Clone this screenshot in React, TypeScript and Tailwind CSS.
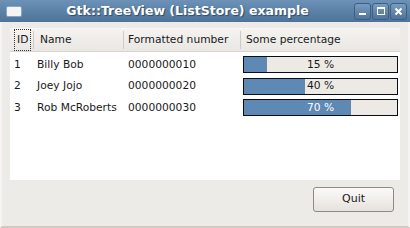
import React from 'react'

const rows = [
  { id: 1, name: 'Billy Bob', num: '0000000010', pct: 15 },
  { id: 2, name: 'Joey Jojo', num: '0000000020', pct: 40 },
  { id: 3, name: 'Rob McRoberts', num: '0000000030', pct: 70 },
]

function TitleButton({ children }: { children: React.ReactNode }) {
  return (
    <div className="flex h-[17px] w-[17px] items-center justify-center rounded-[3px] border border-[#3d5f82] bg-gradient-to-b from-[#7a9cc0] to-[#4f7399]">
      {children}
    </div>
  )
}

export default function App() {
  return (
    <div className="flex h-[228px] w-[410px] flex-col overflow-hidden bg-[#edebe7] font-['DejaVu_Sans',sans-serif] text-[10.7px] text-[#1a1a1a]">
      {/* title bar */}
      <div className="flex h-[22px] items-center bg-gradient-to-b from-[#6d92b8] to-[#4e7399] pl-[7px] pr-[3px]">
        <div className="h-[9px] w-[14px] rounded-[1px] bg-[#f4f4f4] shadow-[0_0_0_1px_#8aa6c4]" />
        <div className="flex-1 text-center text-[12.5px] font-bold text-white [text-shadow:1px_1px_1px_#2c4866]">
          Gtk::TreeView (ListStore) example
        </div>
        <div className="flex gap-[1px]">
          <TitleButton>
            <div className="mt-[6px] h-[2px] w-[7px] bg-white" />
          </TitleButton>
          <TitleButton>
            <div className="h-[8px] w-[8px] border-[1.5px] border-t-2 border-white" />
          </TitleButton>
          <TitleButton>
            <svg width="9" height="9" viewBox="0 0 9 9">
              <path d="M1.5 1.5 L7.5 7.5 M7.5 1.5 L1.5 7.5" stroke="white" strokeWidth="2" />
            </svg>
          </TitleButton>
        </div>
      </div>

      {/* body */}
      <div className="flex flex-1 flex-col border-x-2 border-b-2 border-x-[#f6f4f2] border-b-[#cfc9c2] px-[8px] pt-[6px]">
        <div className="flex h-[152px] flex-col border-t border-[#f8f7f5] bg-white">
          {/* header */}
          <div className="flex h-[23px] items-center border-b border-[#d8d4cf] bg-gradient-to-b from-[#f4f3f1] to-[#eae7e3]">
            <div className="flex w-[23px] items-center pl-[4px]">
              <span className="border border-dotted border-[#333] px-[2px] py-[2px]">ID</span>
            </div>
            <div className="h-[18px] w-px bg-[#cfcac4]" />
            <div className="w-[89px] pl-[6px]">Name</div>
            <div className="h-[18px] w-px bg-[#cfcac4]" />
            <div className="w-[116px] pl-[4px]">Formatted number</div>
            <div className="h-[18px] w-px bg-[#cfcac4]" />
            <div className="flex-1 pl-[5px]">Some percentage</div>
          </div>
          {/* rows */}
          <div className="flex flex-col pt-[2px]">
            {rows.map((r) => (
              <div key={r.id} className="flex h-[21.5px] items-center">
                <div className="w-[25px] pl-[4px]">{r.id}</div>
                <div className="w-[90px] pl-[2px] whitespace-nowrap">{r.name}</div>
                <div className="w-[117px] pl-[3px]">{r.num}</div>
                <div className="pl-[1px]">
                  <div className="relative h-[17px] w-[155px] border border-[#0c0c14] bg-[#edeae6]">
                    <div className="h-full bg-[#5d89b4]" style={{ width: `${r.pct}%` }} />
                    <div
                      className={
                        'absolute inset-0 flex items-center justify-center ' +
                        (r.pct >= 60 ? 'text-white' : 'text-[#1a1a1a]')
                      }
                    >
                      {r.pct} %
                    </div>
                  </div>
                </div>
              </div>
            ))}
          </div>
        </div>
        {/* buttons */}
        <div className="flex flex-1 items-start justify-end pr-[6px] pt-[7px]">
          <button className="flex h-[25px] w-[81px] items-center justify-center rounded-[3px] border border-[#8e8a85] bg-gradient-to-b from-[#fbfaf9] to-[#e6e2dd] text-[11px]">
            Quit
          </button>
        </div>
      </div>
    </div>
  )
}
